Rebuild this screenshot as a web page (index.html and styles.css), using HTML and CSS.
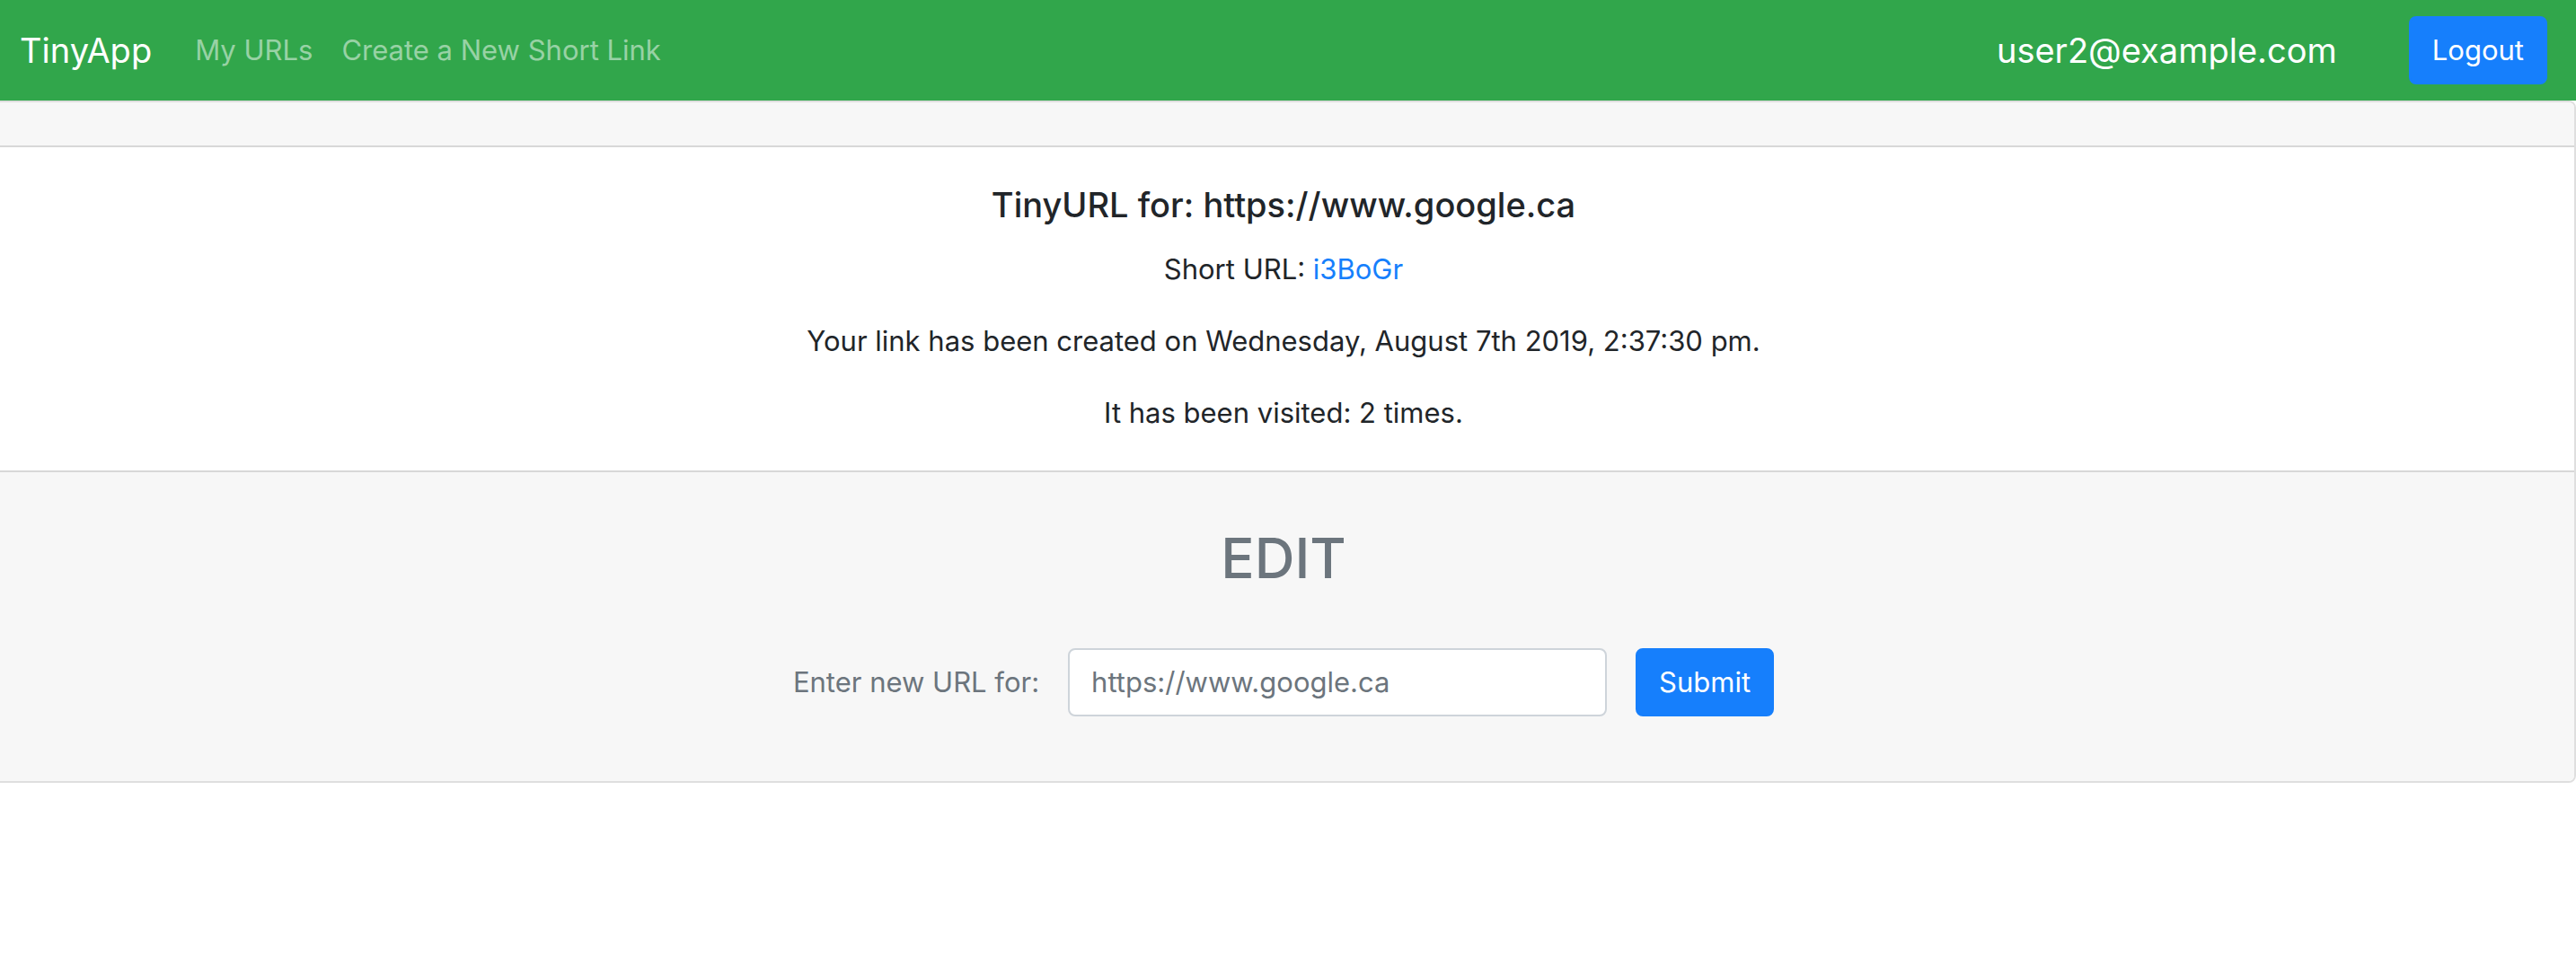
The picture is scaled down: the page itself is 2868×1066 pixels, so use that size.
FILE: index.html
```html
<!DOCTYPE html>
<html lang="en">
<head>
  <meta charset="utf-8">
  <meta name="viewport" content="width=device-width, initial-scale=1">
  <title>TinyApp</title>
  <link rel="stylesheet" href="styles.css">
</head>
<body>
  <header>
    <nav class="navbar">
      <a class="navbar-brand" href="#">TinyApp</a>
      <div class="navbar-nav">
        <a class="nav-link" href="#">My URLs</a>
        <a class="nav-link" href="#">Create a New Short Link</a>
      </div>
      <form class="navbar-user">
        <span class="user-email">user2@example.com</span>
        <button class="btn" type="submit">Logout</button>
      </form>
    </nav>
  </header>
  <main class="card">
    <div class="card-header"></div>
    <div class="card-body">
      <h5 class="card-title">TinyURL for: https://www.google.ca</h5>
      <p class="card-text">Short URL: <a class="short-link" href="#">i3BoGr</a></p>
      <p class="card-text">Your link has been created on Wednesday, August 7th 2019, 2:37:30 pm.</p>
      <p class="card-text">It has been visited: 2 times.</p>
    </div>
    <div class="card-footer">
      <h2 class="edit-title">EDIT</h2>
      <form class="edit-form">
        <label for="long-url">Enter new URL for:</label>
        <input class="form-control" id="long-url" type="text" name="longURL" placeholder="https://www.google.ca">
        <button class="btn" type="submit">Submit</button>
      </form>
    </div>
  </main>
</body>
</html>
```

FILE: styles.css
```css
*,
*::before,
*::after {
  box-sizing: border-box;
}

body {
  margin: 0;
  background: #fff;
  color: #212529;
  font-family: Inter, "Liberation Sans", sans-serif;
  font-size: 31px;
  line-height: 48px;
}

a {
  text-decoration: none;
}

.navbar {
  display: flex;
  align-items: center;
  padding: 18px 32px 18px 22px;
  background: #31a64b;
}

.navbar-brand {
  margin-right: 48px;
  color: #fff;
  font-size: 38px;
}

.navbar-nav {
  display: flex;
  gap: 32px;
}

.nav-link {
  color: rgba(255, 255, 255, 0.5);
}

.navbar-user {
  display: flex;
  align-items: center;
  gap: 80px;
  margin-left: auto;
}

.user-email {
  color: #fff;
  font-size: 38px;
}

.btn {
  min-width: 154px;
  padding: 12px 24px;
  border: 2px solid #167ffc;
  border-radius: 8px;
  background: #167ffc;
  color: #fff;
  font: inherit;
  text-align: center;
}

/* The card runs past the left edge of the window. */
.card {
  margin-left: -10px;
  border: 2px solid #dfdfdf;
  border-radius: 8px;
  text-align: center;
}

.card-header {
  padding: 24px;
  border-bottom: 2px solid #d8d8d8;
  border-radius: 6px 6px 0 0;
  background: #f7f7f7;
}

.card-body {
  padding: 40px;
}

.card-title {
  margin: 0 0 24px;
  font-size: 38px;
  font-weight: 500;
}

.card-text {
  margin: 0 0 32px;
}

.card-text:last-child {
  margin-bottom: 0;
}

.short-link {
  color: #167ffc;
}

.card-footer {
  padding: 56px 40px 72px;
  border-top: 2px solid #d8d8d8;
  border-radius: 0 0 6px 6px;
  background: #f7f7f7;
  color: #6c757d;
}

.edit-title {
  margin: 0 0 60px;
  font-size: 62px;
  font-weight: 500;
  line-height: 80px;
}

.edit-form {
  display: flex;
  align-items: center;
  justify-content: center;
  gap: 32px;
}

.form-control {
  width: 600px;
  padding: 12px 24px;
  border: 2px solid #ced4da;
  border-radius: 8px;
  background: #fff;
  color: #495057;
  font: inherit;
}

.form-control::placeholder {
  color: #6c757d;
  opacity: 1;
}
```
